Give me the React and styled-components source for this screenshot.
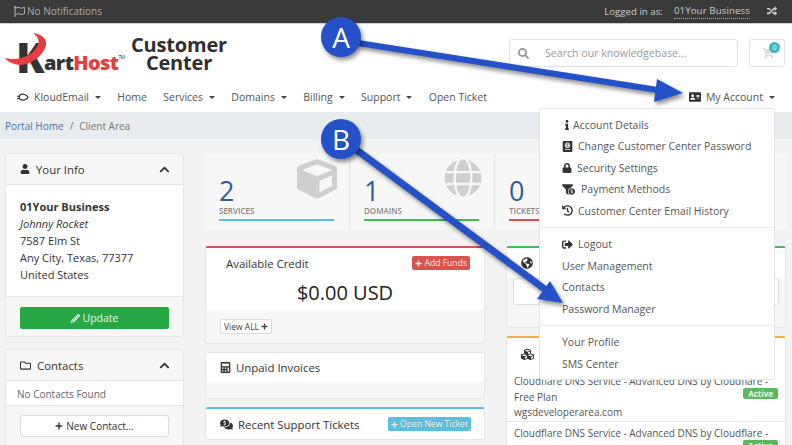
import React from "react";
import styled, { createGlobalStyle } from "styled-components";
import {
  FaRegFlag, FaRandom, FaSearch, FaShoppingCart, FaAddressCard, FaInfo, FaPassport, FaLock,
  FaFunnelDollar, FaHistory, FaSignOutAlt, FaUser, FaChevronUp, FaPencilAlt, FaRegFolder,
  FaPlus, FaCube, FaGlobe, FaCalculator, FaCommentsDollar, FaCubes, FaGlobeAmericas,
} from "react-icons/fa";

const GlobalStyle = createGlobalStyle`
  html, body { margin: 0; padding: 0; }
  body { font-family: "Open Sans", "Liberation Sans", sans-serif; color: #333; background: #f3f3f3; }
  * { box-sizing: border-box; }
`;

const Page = styled.div`
  position: relative;
  width: 792px;
  height: 445px;
  overflow: hidden;
  background: #f3f3f3;
`;

const TopBar = styled.div`
  height: 24px;
  background: #3a3a3a;
  border-bottom: 1px solid #ccc;
  color: #ccc;
  font-size: 9.7px;
  display: flex;
  align-items: center;
  padding: 0 15px 1px 14px;
`;

const Notice = styled.div`
  display: flex;
  align-items: center;
  gap: 2px;
  color: #aaa;
  flex: 1;
  font-size: 10px;
`;

const LoggedIn = styled.span`
  margin-right: 11px;
`;

const Business = styled.span`
  border-bottom: 1px dotted #aaa;
  margin-right: 17px;
  line-height: 14px;
  letter-spacing: 0.1px;
`;

const Header = styled.div`
  height: 60px;
  background: #fff;
  display: flex;
  align-items: center;
  padding: 0 7px 0 4px;
`;

const Logo = styled.div`
  position: relative;
  width: 126px;
  height: 50px;
`;

const LogoK = styled.span`
  position: absolute;
  left: 12px;
  top: 3px;
  font-size: 42px;
  line-height: 50px;
  font-weight: 800;
  color: #333;
`;

const LogoWord = styled.span`
  position: absolute;
  left: 40px;
  top: 19px;
  font-size: 20px;
  line-height: 24px;
  font-weight: 800;
  letter-spacing: -0.6px;
  color: #333;
  b { color: #e53e3e; font-weight: 800; }
  sup { font-size: 5px; position: relative; top: -3px; font-weight: 400; }
`;

const Swoosh = styled.svg`
  position: absolute;
  left: 0;
  top: 4px;
`;

const Title = styled.div`
  width: 98px;
  font-size: 20px;
  line-height: 18px;
  font-weight: 700;
  letter-spacing: -0.2px;
  color: #2f2f2f;
  text-align: center;
`;

const Search = styled.div`
  margin-left: auto;
  width: 229px;
  height: 28px;
  border: 1px solid #e3e3e3;
  border-radius: 3px;
  display: flex;
  align-items: center;
  color: #999;
  font-size: 10.6px;
  padding-left: 8px;
  gap: 16px;
  margin-top: -2px;
  svg { color: #999; }
`;

const Cart = styled.div`
  position: relative;
  width: 36px;
  height: 28px;
  margin-left: 11px;
  margin-top: -2px;
  border: 1px solid #e3e3e3;
  border-radius: 3px;
  display: flex;
  align-items: center;
  padding-left: 12px;
  color: #ddd;
`;

const CartCount = styled.span`
  position: absolute;
  right: 4px;
  top: 2px;
  width: 11px;
  height: 11px;
  border-radius: 50%;
  background: #3cb8c4;
  color: #fff;
  font-size: 7px;
  line-height: 11px;
  text-align: center;
`;

const Nav = styled.div`
  height: 28px;
  background: #fff;
  display: flex;
  align-items: center;
  padding: 0 17px 2px 16px;
  font-size: 10.5px;
  color: #555;
  gap: 16.3px;
`;

const NavItem = styled.span`
  display: flex;
  align-items: center;
  margin-left: ${(p) => (p.$right ? "auto" : "0")};
  svg { margin-right: 5px; }
  &::after {
    content: "";
    display: ${(p) => (p.$caret ? "block" : "none")};
    margin-left: 6px;
    border-left: 3px solid transparent;
    border-right: 3px solid transparent;
    border-top: 3px solid #444;
  }
`;

const Crumbs = styled.div`
  height: 27px;
  background: #e9ecef;
  font-size: 10px;
  line-height: 28px;
  padding-left: 5px;
  color: #777;
  span { color: #4a72ad; }
  i { font-style: normal; margin: 0 6px; }
`;

const Main = styled.div`
  display: flex;
  padding: 14px 7px 0 5px;
  align-items: flex-start;
  gap: 21px;
`;

const Side = styled.div`
  width: 179px;
  flex: none;
  display: flex;
  flex-direction: column;
  gap: 12px;
`;

const Content = styled.div`
  flex: 1;
  display: flex;
  flex-direction: column;
  gap: 17px;
`;

const Stats = styled.div`
  display: flex;
  height: 76px;
  background: #f7f7f7;
`;

const Stat = styled.div`
  position: relative;
  width: 145px;
  padding: 24px 15px 0 14px;
  border-right: 1px solid #e4e4e4;
  overflow: hidden;
`;

const StatNum = styled.div`
  font-size: 27px;
  line-height: 27px;
  color: #2f5d9b;
`;

const StatLabel = styled.div`
  font-size: 8px;
  line-height: 13px;
  font-weight: 600;
  color: #888;
  white-space: nowrap;
  margin-bottom: 2px;
`;

const StatLine = styled.div`
  height: 1.5px;
  background: ${(p) => p.$color};
`;

const StatIcon = styled.div`
  position: absolute;
  top: 6px;
  right: 12px;
  color: #cfcfcf;
  display: flex;
`;

const Columns = styled.div`
  display: flex;
  gap: 21px;
  align-items: flex-start;
`;

const Column = styled.div`
  width: ${(p) => p.$w}px;
  flex: none;
  display: flex;
  flex-direction: column;
  gap: 8px;
`;

const Panel = styled.div`
  background: #f7f7f7;
  border: 1px solid #e6e6e6;
  border-top: ${(p) => (p.$accent ? `2px solid ${p.$accent}` : "1px solid #e6e6e6")};
  border-radius: 3px;
  overflow: hidden;
`;

const PanelHead = styled.div`
  height: ${(p) => p.$h || 31}px;
  display: flex;
  align-items: center;
  gap: ${(p) => p.$gap || 6}px;
  padding: 0 13px 0 14px;
  font-size: 11.4px;
  color: #333;
  background: ${(p) => (p.$white ? "#fff" : "#f7f7f7")};
  border-bottom: ${(p) => (p.$white ? "none" : "1px solid #e6e6e6")};
  svg:last-child { margin-left: ${(p) => (p.$chev ? "auto" : "0")}; }
`;

const PanelBody = styled.div`
  background: #fff;
  padding: 13px 14px;
  font-size: 11px;
  line-height: 17px;
  height: 112px;
  border-bottom: 1px solid #e6e6e6;
  color: #333;
  strong { font-weight: 700; display: block; }
  em { display: block; }
`;

const PanelFoot = styled.div`
  padding: ${(p) => p.$pad || "10px 14px 7px"};
`;

const GreenButton = styled.div`
  height: 22px;
  background: #28a745;
  border-radius: 2px;
  color: #e6f5e9;
  font-size: 10.5px;
  display: flex;
  align-items: center;
  justify-content: center;
  gap: 3px;
`;

const WhiteButton = styled.div`
  height: 22px;
  background: #fff;
  border: 1px solid #ddd;
  border-radius: 3px;
  font-size: 10px;
  display: flex;
  align-items: center;
  justify-content: center;
  gap: 3px;
  color: #333;
`;

const Empty = styled.div`
  background: #fff;
  font-size: 10px;
  line-height: 26px;
  height: 25px;
  padding-left: 11px;
  color: #666;
  border-bottom: 1px solid #e6e6e6;
`;

const CreditHead = styled.div`
  background: #fff;
  height: 62px;
  padding: 4px 14px 0 20px;
`;

const CreditRow = styled.div`
  display: flex;
  justify-content: space-between;
  align-items: center;
  font-size: 11.4px;
  height: 22px;
  color: #333;
`;

const Amount = styled.div`
  font-size: 20px;
  line-height: 28px;
  text-align: center;
  margin-top: 5px;
  margin-left: -6px;
  color: #222;
`;

const Tag = styled.div`
  height: 14px;
  padding: 0 3px;
  margin-left: ${(p) => (p.$push ? "auto" : "0")};
  border-radius: 2px;
  background: ${(p) => p.$color};
  color: #f4e8e8;
  font-size: 8.6px;
  display: flex;
  align-items: center;
  gap: 2px;
`;

const ViewAll = styled.div`
  display: inline-flex;
  align-items: center;
  gap: 2px;
  height: 15px;
  padding: 0 3px;
  margin: 9px 0 9px 14px;
  background: #fff;
  border: 1px solid #ddd;
  border-radius: 2px;
  font-size: 8.5px;
  color: #444;
`;

const Spacer = styled.div`
  height: 16px;
`;

const Field = styled.div`
  height: 27px;
  margin: 0 6px 22px;
  background: #fff;
  border: 1px solid #ddd;
  border-radius: 3px;
`;

const ServiceRow = styled.div`
  position: relative;
  background: #fff;
  padding: 4px 7px 0;
  height: 52px;
  font-size: 10px;
  line-height: 15.5px;
  color: #555;
  border-bottom: 1px solid #e6e6e6;
`;

const Badge = styled.span`
  position: absolute;
  right: 7px;
  top: 18px;
  background: #5cb85c;
  color: #eaf6ea;
  font-size: 8px;
  font-weight: 700;
  line-height: 11px;
  padding: 0 5px;
  border-radius: 2px;
`;

const Menu = styled.div`
  position: absolute;
  left: 539px;
  top: 108px;
  width: 236px;
  height: 272px;
  background: #fff;
  border: 1px solid #e4e4e4;
  border-radius: 3px;
  font-size: 10.5px;
  color: #555;
  padding: 5px 0 0;
`;

const MenuItem = styled.div`
  height: 21.5px;
  display: flex;
  align-items: center;
  gap: ${(p) => p.$gap || 4}px;
  padding-left: 22px;
  white-space: nowrap;
  svg { color: #333; }
`;

const MenuGap = styled.div`
  height: 1px;
  margin: 5px 0 6px;
  background: #eee;
`;

const Overlay = styled.svg`
  position: absolute;
  inset: 0;
  pointer-events: none;
`;

const Marker = styled.div`
  position: absolute;
  left: 321px;
  top: ${(p) => p.$top}px;
  width: 40px;
  height: 40px;
  border-radius: 50%;
  background: #2450c8;
  color: #fff;
  font-size: 28px;
  line-height: 40px;
  text-align: center;
  box-shadow: 2px 3px 4px rgba(0, 0, 0, 0.45);
`;

export default function App() {
  return (
    <Page>
      <GlobalStyle />
      <TopBar>
        <Notice><FaRegFlag size={11} /> No Notifications</Notice>
        <LoggedIn>Logged in as:</LoggedIn>
        <Business>01Your Business</Business>
        <FaRandom size={10} />
      </TopBar>
      <Header>
        <Logo>
          <LogoK>K</LogoK>
          <LogoWord>art<b>Host</b><sup>TM</sup></LogoWord>
          <Swoosh width="46" height="36" viewBox="0 0 46 36">
            <path d="M1 25 C14 28 28 24 34 12 C36 7 33 3 29 0 C38 1 43 6 42 12 C40 22 28 31 17 32 C10 32 4 29 1 25 Z" fill="#e53e3e" />
          </Swoosh>
        </Logo>
        <Title>Customer Center</Title>
        <Search><FaSearch size={11} /> Search our knowledgebase...</Search>
        <Cart><FaShoppingCart size={12} /><CartCount>0</CartCount></Cart>
      </Header>
      <Nav>
        <NavItem $caret>
          <svg width="13" height="9" viewBox="0 0 13 9">
            <path d="M1 3 L4 4 M4 2 C7 0 11 2 12 4 C11 7 7 8 4 6 C3 5 3 3 4 2 Z M1 6 L4 5" fill="none" stroke="#333" strokeWidth="1.3" />
          </svg>
          KloudEmail
        </NavItem>
        <NavItem>Home</NavItem>
        <NavItem $caret>Services</NavItem>
        <NavItem $caret>Domains</NavItem>
        <NavItem $caret>Billing</NavItem>
        <NavItem $caret>Support</NavItem>
        <NavItem>Open Ticket</NavItem>
        <NavItem $caret $right><FaAddressCard size={12} color="#333" /> My Account</NavItem>
      </Nav>
      <Crumbs><span>Portal Home</span><i>/</i>Client Area</Crumbs>
      <Main>
        <Side>
          <Panel>
            <PanelHead $chev>
              <FaUser size={10} /> Your Info
              <FaChevronUp size={11} />
            </PanelHead>
            <PanelBody>
              <strong>01Your Business</strong>
              <em>Johnny Rocket</em>
              7587 Elm St<br />
              Any City, Texas, 77377<br />
              United States
            </PanelBody>
            <PanelFoot><GreenButton><FaPencilAlt size={9} /> Update</GreenButton></PanelFoot>
          </Panel>
          <Panel>
            <PanelHead $chev>
              <FaRegFolder size={11} /> Contacts
              <FaChevronUp size={11} />
            </PanelHead>
            <Empty>No Contacts Found</Empty>
            <PanelFoot $pad="9px 14px 8px"><WhiteButton><FaPlus size={8} /> New Contact...</WhiteButton></PanelFoot>
          </Panel>
        </Side>
        <Content>
          <Stats>
            <Stat>
              <StatIcon><FaCube size={40} /></StatIcon>
              <StatNum>2</StatNum>
              <StatLabel>SERVICES</StatLabel>
              <StatLine $color="#4fc3e8" />
            </Stat>
            <Stat>
              <StatIcon><FaGlobe size={38} /></StatIcon>
              <StatNum>1</StatNum>
              <StatLabel>DOMAINS</StatLabel>
              <StatLine $color="#3fbf4f" />
            </Stat>
            <Stat>
              <StatNum>0</StatNum>
              <StatLabel>TICKETS</StatLabel>
              <StatLine $color="#e04b4b" />
            </Stat>
          </Stats>
          <Columns>
            <Column $w={280}>
              <Panel $accent="#d9534f">
                <CreditHead>
                  <CreditRow>
                    Available Credit
                    <Tag $color="#d9534f"><FaPlus size={7} /> Add Funds</Tag>
                  </CreditRow>
                  <Amount>$0.00 USD</Amount>
                </CreditHead>
                <ViewAll>View ALL <FaPlus size={7} /></ViewAll>
              </Panel>
              <Panel>
                <PanelHead $white $gap={5} $h={29}><FaCalculator size={11} /> Unpaid Invoices</PanelHead>
                <Spacer />
              </Panel>
              <Panel $accent="#5bc0de">
                <PanelHead $white $gap={5} $h={30}>
                  <FaCommentsDollar size={13} /> Recent Support Tickets
                  <Tag $color="#5bc0de" $push><FaPlus size={7} /> Open New Ticket</Tag>
                </PanelHead>
              </Panel>
            </Column>
            <Column $w={280}>
              <Panel $accent="#3fbf4f">
                <PanelHead $white $h={30} $gap={4}><FaGlobeAmericas size={12} /></PanelHead>
                <Field />
              </Panel>
              <Panel $accent="#f0ad4e">
                <PanelHead $white $h={32}><FaCubes size={13} /></PanelHead>
                <ServiceRow>
                  Cloudflare DNS Service - Advanced DNS by Cloudflare - Free Plan<br />wgsdeveloperarea.com
                  <Badge>Active</Badge>
                </ServiceRow>
                <ServiceRow>
                  Cloudflare DNS Service - Advanced DNS by Cloudflare - Free Plan
                  <Badge>Active</Badge>
                </ServiceRow>
              </Panel>
            </Column>
          </Columns>
        </Content>
      </Main>
      <Menu>
        <MenuItem $gap={1}><FaInfo size={10} /> Account Details</MenuItem>
        <MenuItem $gap={5}><FaPassport size={11} /> Change Customer Center Password</MenuItem>
        <MenuItem $gap={5}><FaLock size={10} /> Security Settings</MenuItem>
        <MenuItem $gap={6}><FaFunnelDollar size={13} /> Payment Methods</MenuItem>
        <MenuItem $gap={5}><FaHistory size={11} /> Customer Center Email History</MenuItem>
        <MenuGap />
        <MenuItem $gap={5}><FaSignOutAlt size={11} /> Logout</MenuItem>
        <MenuItem>User Management</MenuItem>
        <MenuItem>Contacts</MenuItem>
        <MenuItem>Password Manager</MenuItem>
        <MenuGap />
        <MenuItem>Your Profile</MenuItem>
        <MenuItem>SMS Center</MenuItem>
      </Menu>
      <Overlay width="792" height="445" viewBox="0 0 792 445">
        <g fill="#2450c8" stroke="#2450c8" style={{ filter: "drop-shadow(2px 3px 2px rgba(0,0,0,0.45))" }}>
          <path d="M358 43 L664 91" strokeWidth="6" />
          <path d="M657 79 L683 93 L654 102 Z" strokeWidth="0" />
          <path d="M354 148 L550 293" strokeWidth="7" />
          <path d="M550 281 L563 303 L537 299 Z" strokeWidth="0" />
        </g>
      </Overlay>
      <Marker $top={17}>A</Marker>
      <Marker $top={119}>B</Marker>
    </Page>
  );
}
